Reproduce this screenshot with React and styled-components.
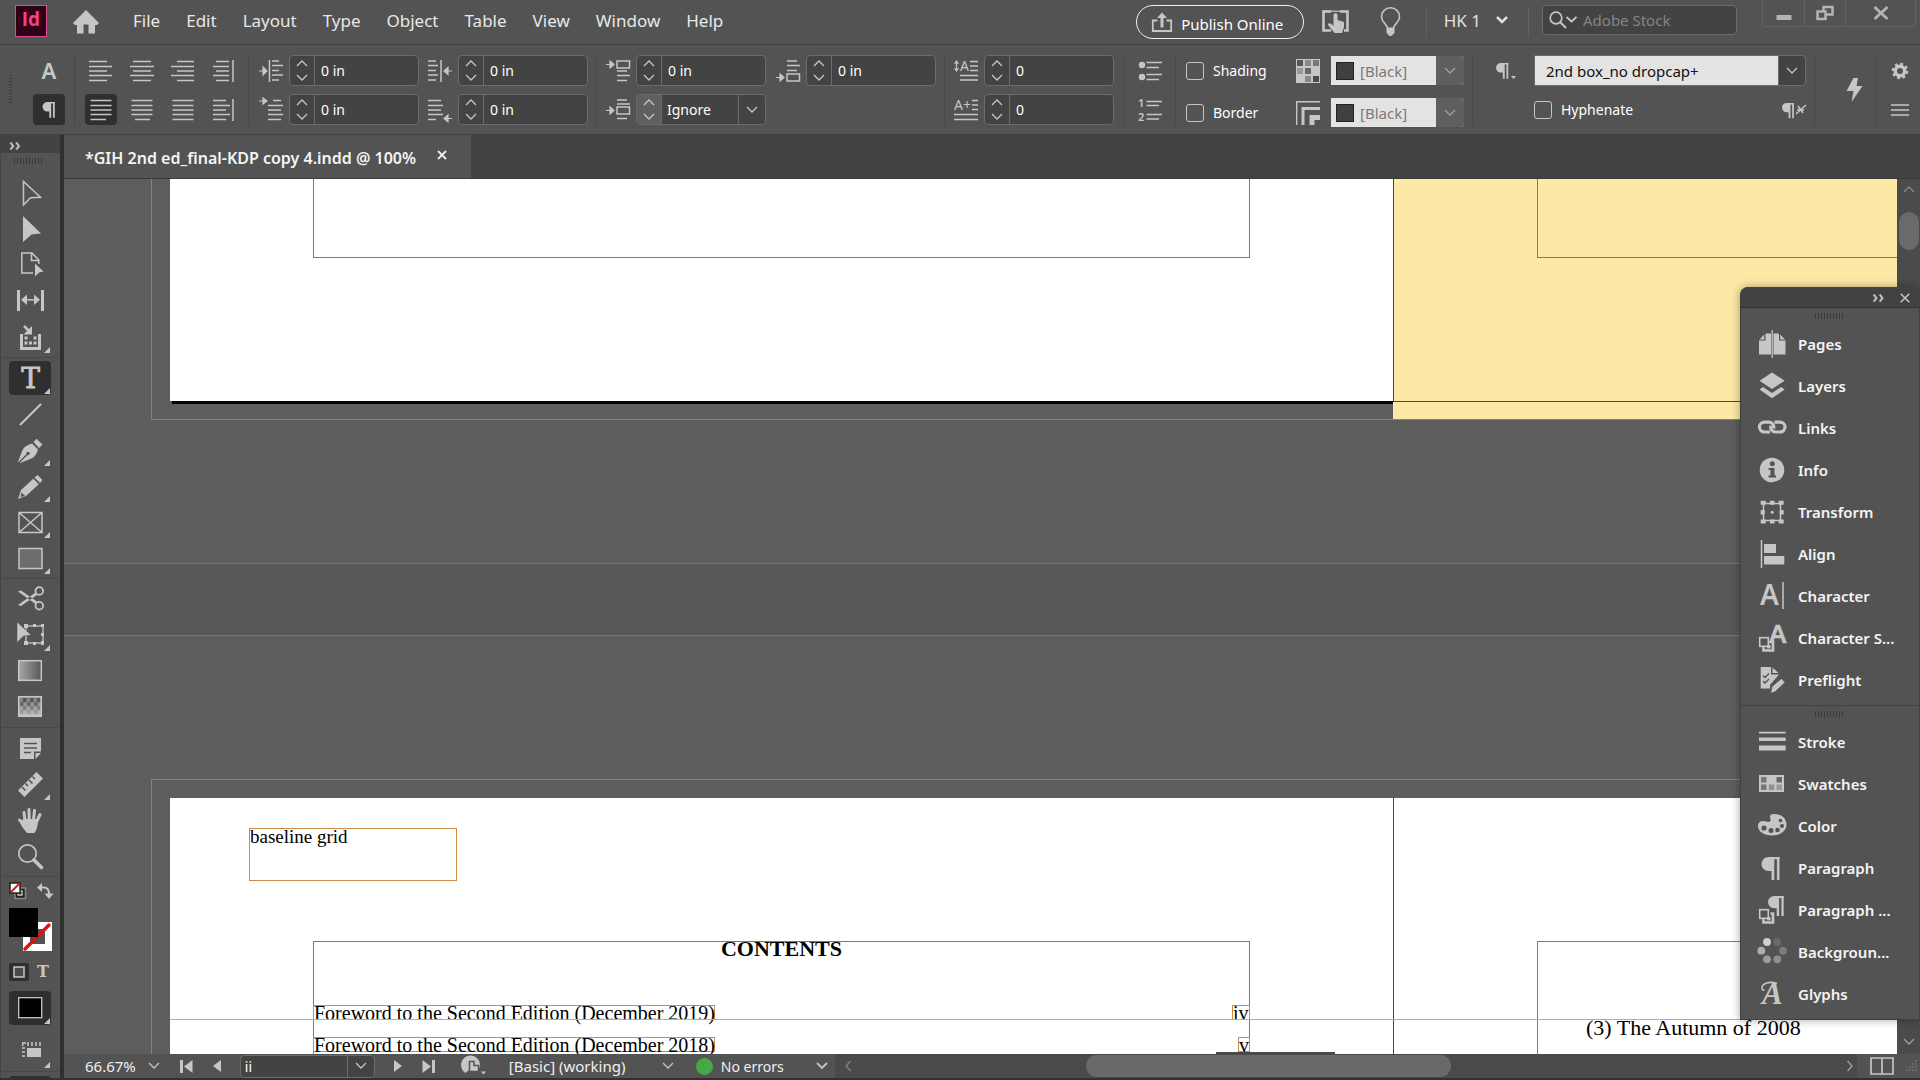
import { useState } from "react";
import styled, { createGlobalStyle } from "styled-components";

const LIGHT = "#c6c6c6";
const DARK = "#535353";

/* ---------- icons ---------- */

const Icon = ({ w = 28, h = w, children, ...rest }) => (
  <svg width={w} height={h} viewBox={`0 0 ${w} ${h}`} fill="none" aria-hidden="true" {...rest}>
    {children}
  </svg>
);

const Chevron = ({ up, w = 12, color = LIGHT, weight = 1.3 }) => (
  <Icon w={w} h={8}>
    <path
      d={up ? `M1 7L${w / 2} 2L${w - 1} 7` : `M1 1L${w / 2} 6L${w - 1} 1`}
      stroke={color}
      strokeWidth={weight}
    />
  </Icon>
);

const lineY = [2.5, 7.5, 12, 16.5, 21.5];
const tightY = [2, 6.5, 11.5, 16, 21];

const Lines = ({ rows, ys = lineY, children }) => (
  <Icon w={24}>
    {rows.map(([a, b], i) => (
      <path key={i} d={`M${a} ${ys[i]}H${b}`} stroke={LIGHT} strokeWidth="1.5" />
    ))}
    {children}
  </Icon>
);

const L = [[0, 18], [0, 23], [0, 18], [0, 23], [0, 18]];
const C = [[3, 21], [0, 24], [3, 21], [0, 24], [3, 21]];
const R = [[6, 23], [0, 23], [6, 23], [0, 23], [6, 23]];
const full = [1.5, 22.5];

const alignTop = [
  ["Align left", <Lines rows={L} />],
  ["Align center", <Lines rows={C} />],
  ["Align right", <Lines rows={R} />],
  [
    "Align away from spine",
    <Lines rows={[[4, 17], [1, 17], [4, 17], [1, 17], [4, 17]]}>
      <path d="M21 1V23" stroke={LIGHT} strokeWidth="1.5" />
    </Lines>,
  ],
];
const alignBottom = [
  ["Justify, last line left", <Lines rows={[full, full, full, full, [1.5, 17]]} />],
  ["Justify, last line centered", <Lines rows={[full, full, full, full, [5, 20]]} />],
  ["Justify all lines", <Lines rows={[full, full, full, full, full]} />],
  [
    "Align towards spine",
    <Lines rows={[[1, 14], [1, 18], [1, 14], [1, 18], [1, 14]]}>
      <path d="M21 1V23" stroke={LIGHT} strokeWidth="1.5" />
    </Lines>,
  ],
];

const ArrowRight = ({ y, half = 4 }) => (
  <path
    d={`M0 ${y}h5M4 ${y - half}l4 ${half}l-4 ${half}z`}
    fill={LIGHT}
    stroke={LIGHT}
    strokeWidth="1.2"
  />
);
const ArrowLeft = ({ y }) => (
  <path
    d={`M24 ${y}h-5M20 ${y - 3.5}l-4 3.5l4 3.5z`}
    fill={LIGHT}
    stroke={LIGHT}
    strokeWidth="1.2"
  />
);

const LeftIndent = () => (
  <Lines rows={[[13, 20], [13, 24], [13, 20], [13, 24], [13, 20]]} ys={tightY}>
    <path d="M10.5 1V23" stroke={LIGHT} strokeWidth="1.5" />
    <ArrowRight y={12} />
  </Lines>
);
const FirstIndent = () => (
  <Lines rows={[[14, 22], [9, 24], [9, 22], [9, 24], [9, 22]]}>
    <ArrowRight y={3} half={3} />
  </Lines>
);
const RightIndent = () => (
  <Lines rows={[[0, 8], [0, 10], [0, 8], [0, 10], [0, 8]]} ys={tightY}>
    <path d="M13 1V23" stroke={LIGHT} strokeWidth="1.5" />
    <ArrowLeft y={12} />
  </Lines>
);
const LastIndent = () => (
  <Lines rows={[[0, 13], [0, 15], [0, 13], [0, 15], [0, 8]]}>
    <ArrowLeft y={20.5} />
  </Lines>
);
const spaceBoxes = {
  top: { y: 2, lines: [12, 16.5, 21.5] },
  middle: { y: 9, lines: [2, 6, 20.5] },
  bottom: { y: 15, lines: [2, 6.5, 11.5] },
};
const SpaceIcon = ({ box }) => {
  const { y, lines } = spaceBoxes[box];
  return (
    <Lines rows={[[11, 21], [11, 24], [11, 21]]} ys={lines}>
      <rect x="11" y={y} width="12.5" height="7" stroke={LIGHT} strokeWidth="1.5" />
      <ArrowRight y={y + 3.5} half={3.5} />
    </Lines>
  );
};
const DropLines = () => (
  <Icon w={24}>
    <path d="M2.5 3V11M0.5 5l2-3l2 3M0.5 9l2 3l2-3" stroke={LIGHT} strokeWidth="1.2" />
    <text x="6" y="12" fontSize="14" fill={LIGHT}>A</text>
    <path d="M16 2.5h8M16 7h8M16 11.5h8M6 16.5h18M6 21h18" stroke={LIGHT} strokeWidth="1.5" />
  </Icon>
);
const DropChars = () => (
  <Icon w={24}>
    <text x="0" y="12" fontSize="14" fill={LIGHT}>A+</text>
    <path d="M18 2.5h6M18 7h6M18 11.5h6M0 16.5h24M0 21.5h24" stroke={LIGHT} strokeWidth="1.5" />
  </Icon>
);
const Bullets = () => (
  <Icon w={24}>
    <circle cx="4" cy="6" r="3.2" fill={LIGHT} />
    <circle cx="4" cy="18" r="3.2" fill={LIGHT} />
    <path d="M8.5 3.5H24M8.5 8.5H21M8.5 15.5H24M8.5 20.5H21" stroke={LIGHT} strokeWidth="1.5" />
  </Icon>
);
const Numbers = () => (
  <Icon w={24}>
    <text x="0" y="9" fontSize="11" fontWeight="600" fill={LIGHT}>1</text>
    <text x="0" y="23" fontSize="11" fontWeight="600" fill={LIGHT}>2</text>
    <path d="M8.5 3.5H24M8.5 7.5H21M8.5 16.5H24M8.5 21H21" stroke={LIGHT} strokeWidth="1.5" />
  </Icon>
);
const SwatchGrid = () => (
  <Icon w={24}>
    <rect width="24" height="24" fill={LIGHT} />
    {[
      [1, 1, "#555"], [9, 1, "#8a8a8a"], [17, 1, "#777"],
      [1, 9, "#999"], [9, 9, "#666"],
      [9, 17, "#888"], [17, 17, "#4c4c4c"],
    ].map(([x, y, f]) => (
      <rect key={`${x}-${y}`} x={x} y={y} width="6" height="6" fill={f} />
    ))}
  </Icon>
);
const CornerIcon = () => (
  <Icon w={24}>
    <path d="M0.7 24V0.7H24" stroke={LIGHT} strokeWidth="1.4" />
    <path d="M7 24V7.5H24" stroke={LIGHT} strokeWidth="3" />
    <path d="M16 24V16.5H24" stroke={LIGHT} strokeWidth="5" />
  </Icon>
);
const Pilcrow = ({ x = 0, y = 0, s = 1 }) => (
  <g transform={`translate(${x} ${y}) scale(${s})`} fill={LIGHT}>
    <path d="M7 0H18V2.2H11V14H7A7 7 0 0 1 7 0Z" />
    <path d="M10 0h2.8v23H10zM15.4 0H18v23h-2.6z" />
  </g>
);
const Gear = () => (
  <Icon w={18}>
    <circle cx="9" cy="9" r="4.7" stroke={LIGHT} strokeWidth="3.4" />
    <circle cx="9" cy="9" r="7" stroke={LIGHT} strokeWidth="2.6" strokeDasharray="2.8 2.7" />
  </Icon>
);
const MoreMark = () => (
  <Corner width="6" height="6" viewBox="0 0 6 6" aria-hidden="true">
    <path d="M6 0V6H0Z" fill={LIGHT} />
  </Corner>
);

const toolGroups = [
  [
    { name: "Selection", icon: <path d="M7.5 2.5V26L14.5 18.8L24.5 18.3Z" stroke={LIGHT} strokeWidth="1.5" /> },
    { name: "Direct selection", icon: <path d="M7 1L25 18.5L15.5 19.5L7 27Z" fill={LIGHT} /> },
    {
      name: "Page",
      icon: (
        <>
          <path d="M17 22H5.8V2H16L22.8 9V13M15.5 2V9.5H22.8" stroke={LIGHT} strokeWidth="1.5" />
          <path d="M19 12.5L27.5 20.5L23 21.5L19 25.5Z" fill={LIGHT} />
        </>
      ),
    },
    {
      name: "Gap",
      icon: (
        <>
          <path d="M2.5 3V24M26.5 3V24" stroke={LIGHT} strokeWidth="3" />
          <path d="M8 12.8H21" stroke={LIGHT} strokeWidth="1.5" />
          <path d="M5 12.8L11 7.5V18ZM24 12.8L18 7.5V18Z" fill={LIGHT} />
        </>
      ),
    },
    {
      name: "Content collector",
      more: true,
      icon: (
        <>
          <path d="M5.5 11V25.5H23.5V11" stroke={LIGHT} strokeWidth="3" />
          <path d="M8 3L14 9" stroke={LIGHT} strokeWidth="2.5" />
          <path d="M16 3V11.5H7.5Z" fill={LIGHT} />
          <path
            d="M8.5 13.5h3v3h-3zM17.5 13.5h3v3h-3zM8.5 18.5h3v3h-3zM13 18.5h3v3h-3zM17.5 18.5h3v3h-3z"
            fill={LIGHT}
          />
        </>
      ),
    },
  ],
  [
    {
      name: "Type",
      more: true,
      icon: (
        <text
          x="14.5"
          y="24"
          textAnchor="middle"
          fontFamily="DejaVu Serif"
          fontSize="28"
          fill={LIGHT}
          stroke={LIGHT}
          strokeWidth="0.9"
        >
          T
        </text>
      ),
    },
    { name: "Line", icon: <path d="M4 25L25 4" stroke={LIGHT} strokeWidth="2.2" /> },
    {
      name: "Pen",
      more: true,
      icon: (
        <>
          <path d="M17.5 6L20.5 2.7L26.5 8.5L23 12Z" fill={LIGHT} />
          <path d="M16 7.5C11 9 8 11 6.5 14L2 26L4 27L15.5 22.5C19 20.5 20.5 18 22 13.5Z" fill={LIGHT} />
          <path d="M2.5 27L11 18.5" stroke={DARK} strokeWidth="1.5" />
          <circle cx="12" cy="17.5" r="1.7" fill={DARK} />
        </>
      ),
    },
    {
      name: "Pencil",
      more: true,
      icon: (
        <>
          <path d="M18.5 5.5L21.5 3L26.5 8L24 11Z" fill={LIGHT} />
          <path d="M17.3 6.7L22.8 12.2L10 24L2 27L5 18Z" fill={LIGHT} />
          <path d="M5.5 20.5L9 24L4.5 25Z" fill={DARK} />
        </>
      ),
    },
    {
      name: "Rectangle frame",
      more: true,
      icon: <path d="M3 4.5H26V24.5H3ZM3 4.5L26 24.5M26 4.5L3 24.5" stroke={LIGHT} strokeWidth="1.5" />,
    },
    {
      name: "Rectangle",
      more: true,
      icon: <rect x="3" y="4.5" width="23" height="20" fill="#6c6c6c" stroke={LIGHT} strokeWidth="1.5" />,
    },
  ],
  [
    {
      name: "Scissors",
      icon: (
        <>
          <circle cx="23.3" cy="6" r="3.8" stroke={LIGHT} strokeWidth="1.8" />
          <circle cx="23.3" cy="20.7" r="3.8" stroke={LIGHT} strokeWidth="1.8" />
          <path d="M2 6.5L5 5.5L21 16.5L19.5 19ZM2 20L5 21L21 10L19.5 7.5Z" fill={LIGHT} />
        </>
      ),
    },
    {
      name: "Free transform",
      more: true,
      icon: (
        <>
          <rect x="10" y="5" width="17" height="17" stroke={LIGHT} strokeWidth="1.3" />
          <path
            d="M8 3h4v4h-4zM17 3h3v3h-3zM25 3h3v3h-3zM25 12h3v3h-3zM25 20h3v4h-3zM17 21h3v3h-3zM8 20h4v4h-4z"
            fill={LIGHT}
          />
          <path d="M1 1L15 14L7.5 15L1 21.5Z" fill={LIGHT} stroke={DARK} strokeWidth="0.5" />
        </>
      ),
    },
    {
      name: "Gradient swatch",
      icon: (
        <>
          <linearGradient id="grad">
            <stop offset="0" stopColor="#a8a8a8" />
            <stop offset="1" stopColor="#585858" />
          </linearGradient>
          <rect x="2.7" y="3.7" width="22.6" height="19.6" fill="url(#grad)" stroke={LIGHT} strokeWidth="1.5" />
        </>
      ),
    },
    {
      name: "Gradient feather",
      icon: (
        <>
          <linearGradient id="fade" x2="0" y2="1">
            <stop offset="0.2" stopColor="#858585" />
            <stop offset="1" stopColor="#c0c0c0" />
          </linearGradient>
          <rect x="2.7" y="3.7" width="22.6" height="19.6" fill="url(#fade)" stroke={LIGHT} strokeWidth="1.5" />
          {[0, 1, 2, 3].map((r) =>
            [0, 1, 2].map((c) => (
              <rect
                key={`${r}-${c}`}
                x={(r % 2 ? 4 : 8) + c * 7 - (r % 2 ? 0 : 1)}
                y={5 + r * 4}
                width={c === 2 && r % 2 === 0 ? 3 : 3.5}
                height="4"
                fill="#444"
                opacity={0.7 - r * 0.17}
              />
            ))
          )}
        </>
      ),
    },
  ],
  [
    {
      name: "Note",
      icon: (
        <>
          <path d="M4 4H25V17.5H18V25H4Z" fill={LIGHT} />
          <path d="M25 19L19.5 25V19Z" fill={LIGHT} />
          <path d="M8 9.5H21M8 14H21M8 18.5H15" stroke={DARK} strokeWidth="1.5" />
        </>
      ),
    },
    {
      name: "Measure",
      more: true,
      icon: (
        <>
          <path d="M2 20.5L20.5 2L27 8.5L8.5 27Z" fill={LIGHT} />
          <path
            d="M6 17L9.5 20.5M9.5 13.5L12 16M13 10L16.5 13.5M16.5 6.5L19 9"
            stroke={DARK}
            strokeWidth="1.5"
          />
        </>
      ),
    },
    {
      name: "Hand",
      icon: (
        <>
          <path
            d="M9 15L8 6.5M13.2 14L13 3.5M17.5 14L18.5 4.5M20.5 16L24 8.5M9 19L3.5 14"
            stroke={LIGHT}
            strokeWidth="3"
            strokeLinecap="round"
          />
          <path d="M7.5 13H21.5C22.5 19 20.5 24 18.5 27H11C8.5 24 6 21 3.5 16Z" fill={LIGHT} />
        </>
      ),
    },
    {
      name: "Zoom",
      icon: (
        <>
          <circle cx="11.5" cy="11.5" r="8.7" stroke={LIGHT} strokeWidth="1.7" />
          <path d="M18 18L25.5 25.5" stroke={LIGHT} strokeWidth="3.5" strokeLinecap="round" />
        </>
      ),
    },
  ],
];

const StyleSquares = () => (
  <>
    <path d="M5.5 23V26.5H15V17.5H12.5" stroke={LIGHT} strokeWidth="2.6" />
    <rect x="1.7" y="13.7" width="8.6" height="8.6" stroke={LIGHT} strokeWidth="1.6" />
    <rect x="9" y="21" width="3.5" height="3.5" fill={LIGHT} />
  </>
);

const panelGroups = [
  [
    ["Pages", (
      <>
        <path d="M1 11V24.5H13V3.5H7.5V10.5H1ZM27.5 11V24.5H15.5V3.5H21V10.5H27.5Z" fill={LIGHT} />
        <path d="M1.5 9.5L6.3 4.5V9.5ZM27 9.5L22.2 4.5V9.5Z" fill={LIGHT} />
        <path d="M14.2 0V28" stroke={LIGHT} strokeWidth="1.3" />
      </>
    )],
    ["Layers", (
      <path
        d="M14 0.5L26.7 8.7L14 17L1.5 8.7ZM1.5 17.5L5 15L14 21L23 15L26.7 17.5L14 26.3Z"
        fill={LIGHT}
      />
    )],
    ["Links", (
      <path
        d="M12 18H6.4A4.9 4.9 0 0 1 6.4 8.2H11A4.9 4.9 0 0 1 15.6 14.5M16.5 8.2H22.1A4.9 4.9 0 0 1 22.1 18H17.5A4.9 4.9 0 0 1 12.9 11.7"
        stroke={LIGHT}
        strokeWidth="3.2"
      />
    )],
    ["Info", (
      <>
        <circle cx="14" cy="14" r="12.3" fill={LIGHT} />
        <circle cx="14.3" cy="7.8" r="2.5" fill={DARK} />
        <path d="M10.5 12H16.5V19.5H18V21.5H10.5V19.5H12.5V14H10.5Z" fill={DARK} />
      </>
    )],
    ["Transform", (
      <>
        <rect x="5.5" y="5.5" width="17" height="17" stroke={LIGHT} strokeWidth="1.5" />
        <path
          d="M2.7 2.7h5v4h-5zM12 2.7h4.5v4H12zM20.7 2.7h5v4h-5zM2.7 12h4v4.5h-4zM21.7 12h4v4.5h-4zM2.7 21.5h5v4h-5zM12 21.5h4.5v4H12zM20.7 21.5h5v4h-5z"
          fill={LIGHT}
        />
        <circle cx="14.2" cy="14.2" r="1.5" fill={LIGHT} />
      </>
    )],
    ["Align", (
      <>
        <path d="M3.5 0V28" stroke={LIGHT} strokeWidth="1.5" />
        <path d="M6 4h12v9H6zM6 16h20.3v8.5H6z" fill={LIGHT} />
      </>
    )],
    ["Character", (
      <>
        <text x="2" y="23" fontWeight="600" fontSize="28" fill={LIGHT}>A</text>
        <path d="M25 0V27" stroke={LIGHT} strokeWidth="1.5" />
      </>
    )],
    ["Character Styles", (
      <>
        <text x="11" y="19" fontSize="26" fill={LIGHT} stroke={LIGHT} strokeWidth="0.5">A</text>
        <StyleSquares />
      </>
    ), "Character S..."],
    ["Preflight", (
      <>
        <path d="M2.7 1H13V8.5H21L12 19V22.5H2.7Z" fill={LIGHT} />
        <path d="M14.5 1.5L20.5 7H14.5Z" fill={LIGHT} />
        <path d="M5 9.5L7 11.5L11 7.5M5 15L7 17L11 13" stroke={DARK} strokeWidth="1.4" />
        <path
          d="M14 20.5L23.5 12.5L27 16.5L17.5 25.5L12.5 27.5Z"
          fill={LIGHT}
          stroke={DARK}
          strokeWidth="0.8"
        />
      </>
    )],
  ],
  [
    ["Stroke", <path d="M1 3.7h26.7v1.8H1zM1 9.5h26.7v3.5H1zM1 17.5h26.7v5H1z" fill={LIGHT} />],
    ["Swatches", (
      <>
        <rect x="1" y="5" width="25" height="17" fill={LIGHT} />
        <path d="M3 7h5.5v5.5H3zM3 14.5h5.5V20H3z" fill="#777" />
        <path d="M10.8 14.5h5.5V20h-5.5z" fill="#8f8f8f" />
        <path d="M18.5 7H24v5.5h-5.5z" fill="#666" />
        <path d="M18.5 14.5H24V20h-5.5z" fill="#999" />
      </>
    )],
    ["Color", (
      <>
        <path
          d="M16 2C23 2 28.5 6 28.5 12.5C28.5 19 22 23.5 14.500 23.5C6 23.5 0 19.5 0 14C0 9.5 4 8 8 9.5C11 10.5 13.5 9.5 12.5 7C11.5 4 11.5 2 16 2Z"
          fill={LIGHT}
        />
        <circle cx="6" cy="16" r="2.6" fill={DARK} />
        <circle cx="13" cy="18.5" r="2.5" fill={DARK} />
        <circle cx="19.5" cy="18" r="2.3" fill={DARK} />
        <circle cx="24" cy="14" r="2" fill={DARK} />
        <circle cx="22.5" cy="8.5" r="1.8" fill={DARK} />
      </>
    )],
    ["Paragraph", <Pilcrow x={3.5} y={3} />],
    ["Paragraph Styles", (
      <>
        <Pilcrow x={10} y={0} s={0.87} />
        <StyleSquares />
      </>
    ), "Paragraph ..."],
    ["Background Tasks", (
      <>
        {[
          [9, 4, "#d0d0d0"],
          [19.3, 4, "#696969"],
          [25, 12.7, "#7c7c7c"],
          [19.3, 21.3, "#8e8e8e"],
          [9, 21.3, "#9d9d9d"],
          [3.3, 12.7, "#adadad"],
        ].map(([cx, cy, f]) => (
          <circle key={f} cx={cx} cy={cy} r="3.9" fill={f} />
        ))}
      </>
    ), "Backgroun..."],
    ["Glyphs", (
      <>
        <text x="4" y="24" fontFamily="Liberation Serif" fontStyle="italic" fontSize="31" fill={LIGHT}>A</text>
        <path d="M19 3.5C12 1 4 3 4 8C4 9.5 5 10.5 6.5 10" stroke={LIGHT} strokeWidth="1.6" />
      </>
    )],
  ],
];

/* ---------- small building blocks ---------- */

const Spin = ({ label, value, select }) => {
  const [v, setV] = useState(value);
  return (
    <SpinBox>
      <SpinButtons $off={select}>
        <Bare type="button" aria-label={`Increase ${label}`}><Chevron up /></Bare>
        <Bare type="button" aria-label={`Decrease ${label}`}><Chevron /></Bare>
      </SpinButtons>
      {select ? (
        <>
          <SpinSelect aria-label={label} defaultValue={value}>
            <option>{value}</option>
          </SpinSelect>
          <SelectArrow><Chevron /></SelectArrow>
        </>
      ) : (
        <SpinInput aria-label={label} value={v} onChange={(e) => setV(e.target.value)} />
      )}
    </SpinBox>
  );
};

const Check = ({ children }) => (
  <CheckLabel>
    <CheckBox type="checkbox" />
    {children}
  </CheckLabel>
);

const ColorPick = ({ label }) => (
  <ColorField>
    <Swatch />
    <ColorSelect aria-label={label} disabled defaultValue="[Black]">
      <option>[Black]</option>
    </ColorSelect>
    <ColorArrow><Chevron color="#a0a0a0" /></ColorArrow>
  </ColorField>
);

const menus = ["File", "Edit", "Layout", "Type", "Object", "Table", "View", "Window", "Help"];

const MenuBar = () => (
  <Menu>
    <Logo>Id</Logo>
    <HomeButton type="button" aria-label="Home">
      <Icon w={26} h={24}>
        <path d="M13 0L26 13L24 15H22V23.5H15.5V14.5H10.5V23.5H4V15H2L0 13Z" fill={LIGHT} />
      </Icon>
    </HomeButton>
    <MenuItems>
      {menus.map((m) => <MenuItem key={m} type="button">{m}</MenuItem>)}
    </MenuItems>
    <Publish type="button">
      <Icon w={20} h={20}>
        <path d="M5.5 8.5H0.8V19H19.2V8.5H14.5" stroke={LIGHT} strokeWidth="1.8" />
        <path d="M10 15.5V5" stroke={LIGHT} strokeWidth="3" />
        <path d="M10 0.5L15 6H5Z" fill={LIGHT} />
      </Icon>
      <span>Publish Online</span>
    </Publish>
    <TopIcon type="button" aria-label="Touch workspace">
      <Icon w={27} h={24}>
        <path d="M9 1.5H1.5V20.5H9M18 1.5H25.5V20.5H22" stroke={LIGHT} strokeWidth="2.6" />
        <path d="M1 1.2H26" stroke={LIGHT} strokeWidth="1.2" />
        <path d="M11.500 5C11.5 2.500 15.5 2.500 15.5 5V10L22 12V17L20 23H12.500L6 15C6 12.500 8.5 12.500 11.5 16Z" fill={LIGHT} />
      </Icon>
    </TopIcon>
    <TopIcon type="button" aria-label="Learn">
      <Icon w={21} h={30}>
        <path
          d="M7.5 21.5C7.5 17 1.5 16 1.5 9.800A9 9 0 0 1 19.5 9.8C19.5 16 13.5 17 13.5 21.5"
          stroke={LIGHT}
          strokeWidth="1.6"
        />
        <path d="M6.5 20.5H14.5V26L11.5 29H9.5L6.5 26Z" fill={LIGHT} />
      </Icon>
    </TopIcon>
    <Workspace type="button">
      HK 1
      <Chevron w={12} weight={2.5} color="#e0e0e0" />
    </Workspace>
    <Search>
      <Icon w={28} h={18}>
        <circle cx="7" cy="7" r="5.8" stroke={LIGHT} strokeWidth="1.7" />
        <path d="M11 11L17 17" stroke={LIGHT} strokeWidth="2" />
        <path d="M17.5 6L22.5 10.5L27.5 6" stroke={LIGHT} strokeWidth="1.7" />
      </Icon>
      <SearchInput aria-label="Adobe Stock" placeholder="Adobe Stock" />
    </Search>
    <WindowButtons>
      <WinButton type="button" aria-label="Minimize">
        <Icon w={16}><path d="M0.5 15H15.5V20H0.5Z" fill="#b4b4b4" transform="translate(0 -5)" /></Icon>
      </WinButton>
      <WinButton type="button" aria-label="Restore">
        <Icon w={18} h={16}>
          <path d="M7.5 2H16.5V9.5H7.5Z" stroke="#b4b4b4" strokeWidth="2.5" />
          <path d="M1.5 6.5H9.5V14H1.5Z" fill={DARK} stroke="#b4b4b4" strokeWidth="2.5" />
        </Icon>
      </WinButton>
      <WinButton type="button" aria-label="Close" $wide>
        <Icon w={16} h={14}><path d="M1.5 1L14.5 13M14.5 1L1.5 13" stroke="#b4b4b4" strokeWidth="2.8" /></Icon>
      </WinButton>
    </WindowButtons>
  </Menu>
);

const ControlBar = () => (
  <Controls>
    <Group $pl={9} $pr={9}>
      <SideGrip />
      <Stack>
        <ModeButton type="button" aria-label="Character formatting">
          <Icon w={24}>
            <text x="12" y="20" textAnchor="middle" fontWeight="600" fontSize="22" fill={LIGHT}>A</text>
          </Icon>
        </ModeButton>
        <ModeButton type="button" aria-label="Paragraph formatting" $on>
          <Icon w={24}><Pilcrow x={5.5} y={4} s={0.68} /></Icon>
        </ModeButton>
      </Stack>
    </Group>
    <Group $pl={10} $pr={8}>
      <Stack>
        <Row $gap={9}>
          {alignTop.map(([n, i]) => (
            <ModeButton key={n} type="button" aria-label={n}>{i}</ModeButton>
          ))}
        </Row>
        <Row $gap={9}>
          {alignBottom.map(([n, i], k) => (
            <ModeButton key={n} type="button" aria-label={n} $on={k === 0}>{i}</ModeButton>
          ))}
        </Row>
      </Stack>
    </Group>
    <Group $pl={10} $pr={8} $gap={9}>
      <Stack>
        <Row><LeftIndent /><Spin label="Left indent" value="0 in" /></Row>
        <Row><FirstIndent /><Spin label="First line left indent" value="0 in" /></Row>
      </Stack>
      <Stack>
        <Row><RightIndent /><Spin label="Right indent" value="0 in" /></Row>
        <Row><LastIndent /><Spin label="Last line right indent" value="0 in" /></Row>
      </Stack>
    </Group>
    <Group $pl={9} $pr={8} $gap={10}>
      <Stack>
        <Row><SpaceIcon box="top" /><Spin label="Space before" value="0 in" /></Row>
        <Row><SpaceIcon box="middle" /><Spin label="Space between paragraphs" value="Ignore" select /></Row>
      </Stack>
      <Stack>
        <Row><SpaceIcon box="bottom" /><Spin label="Space after" value="0 in" /></Row>
      </Stack>
    </Group>
    <Group $pl={9} $pr={9}>
      <Stack>
        <Row><DropLines /><Spin label="Drop cap lines" value="0" /></Row>
        <Row><DropChars /><Spin label="Drop cap characters" value="0" /></Row>
      </Stack>
    </Group>
    <Group $pl={14} $pr={13}>
      <Stack>
        <Row><Bare type="button" aria-label="Bulleted list"><Bullets /></Bare></Row>
        <Row><Bare type="button" aria-label="Numbered list"><Numbers /></Bare></Row>
      </Stack>
    </Group>
    <Group $pl={10} $pr={8}>
      <Stack $gap={11}>
        <Row $gap={11}><Check>Shading</Check><SwatchGrid /><ColorPick label="Shading color" /></Row>
        <Row $gap={11}><Check>Border</Check><CornerIcon /><ColorPick label="Border color" /></Row>
      </Stack>
    </Group>
    <Group $pl={23} $pr={8} $grow $gap={14}>
      <Row>
        <Icon w={24}>
          <Pilcrow y={4} s={0.68} />
          <path d="M15 17h5l-2.5 3z" fill={LIGHT} />
        </Icon>
      </Row>
      <Stack $grow>
        <StyleField>
          <StyleSelect aria-label="Paragraph style" defaultValue="2nd box_no dropcap+">
            <option>2nd box_no dropcap+</option>
          </StyleSelect>
          <SelectArrow><Chevron /></SelectArrow>
        </StyleField>
        <Row $between>
          <Check>Hyphenate</Check>
          <Bare type="button" aria-label="Clear overrides">
            <Icon w={24}>
              <Pilcrow y={5} s={0.66} />
              <path d="M14 16L24 7M16 8L21 15M15 12H22" stroke={LIGHT} strokeWidth="1.5" />
            </Icon>
          </Bare>
        </Row>
      </Stack>
    </Group>
    <Group $pl={31} $pr={13} $middle>
      <Bare type="button" aria-label="Quick apply">
        <Icon w={17} h={24}><path d="M7.5 0H12L10.5 8H16.5L5.5 24L7.5 13H0.5Z" fill={LIGHT} /></Icon>
      </Bare>
    </Group>
    <Group $pl={14} $pr={11} $last>
      <Stack>
        <Row><Bare type="button" aria-label="Customize"><Gear /></Bare></Row>
        <Row>
          <Bare type="button" aria-label="Panel menu">
            <Icon w={18} h={12}><path d="M0 1H18M0 6H18M0 11H18" stroke={LIGHT} strokeWidth="1.5" /></Icon>
          </Bare>
        </Row>
      </Stack>
    </Group>
  </Controls>
);

const Toolbar = () => {
  const [tool, setTool] = useState("Type");
  return (
    <Tools>
      <ToolHead><Double>››</Double></ToolHead>
      <GripRow><Grip /></GripRow>
      {toolGroups.map((group, i) => (
        <ToolGroup key={i}>
          {group.map(({ name, icon, more }) => (
            <Tool
              key={name}
              type="button"
              aria-label={name}
              $on={tool === name}
              onClick={() => setTool(name)}
            >
              <Icon>{icon}</Icon>
              {more && <MoreMark />}
            </Tool>
          ))}
        </ToolGroup>
      ))}
      <SwatchArea>
        <SwatchRow>
          <Bare type="button" aria-label="Default fill and stroke">
            <Icon w={18}>
              <path d="M6 6H16.5V16.5H6Z" fill="#222" stroke="#888" strokeWidth="1.5" />
              <path d="M9 9H13V13H9Z" stroke={LIGHT} strokeWidth="1.3" />
              <rect x="1" y="1" width="10" height="10" fill="#fff" stroke="#222" strokeWidth="1.5" />
              <path d="M2 10L10 2" stroke="#e01010" strokeWidth="1.8" />
            </Icon>
          </Bare>
          <Bare type="button" aria-label="Swap fill and stroke">
            <Icon w={18}>
              <path d="M4 5.5H8Q13 5.5 13 12" stroke={LIGHT} strokeWidth="2" />
              <path d="M1 5.5L6 1V10ZM8.5 11.5H17.5L13 17Z" fill={LIGHT} />
            </Icon>
          </Bare>
        </SwatchRow>
        <Icon w={44}>
          <rect x="14" y="14" width="29" height="29" fill="#fff" />
          <rect x="21" y="21" width="15" height="15" fill={DARK} />
          <path d="M16 41L40 17" stroke="#e8100c" strokeWidth="3.5" strokeLinecap="round" />
          <rect width="29" height="29" fill="#000" />
        </Icon>
        <TargetRow>
          <Target type="button" aria-label="Formatting affects container" $on>
            <Icon w={12}>
              <rect x="1" y="1" width="10" height="10" stroke={LIGHT} strokeWidth="1.5" fill="#4a4a4a" />
            </Icon>
          </Target>
          <Target type="button" aria-label="Formatting affects text">T</Target>
        </TargetRow>
        <Tool type="button" aria-label="Apply color" $on>
          <Icon><rect x="2.7" y="3.7" width="23" height="20" fill="#000" stroke={LIGHT} strokeWidth="1.3" /></Icon>
          <MoreMark />
        </Tool>
        <Tool type="button" aria-label="View options" $gap>
          <Icon>
            <path d="M11 10h14v9H11z" fill={LIGHT} />
            <path
              d="M6 5h4M6.7 4.5V8M12 4V8M16 4V8M20 4V8M24 4V8M6 10h3M6 14h3M6 18h3"
              stroke={LIGHT}
              strokeWidth="1.5"
            />
          </Icon>
          <MoreMark />
        </Tool>
      </SwatchArea>
      <Tool type="button" aria-label="Screen mode" $on />
    </Tools>
  );
};

const Document = () => (
  <Pasteboard>
    <SpreadBand />
    <Item $x={87} $y={-40} $w={2000} $h={281} $line="#cf5f6c" />
    <Item $x={106} $y={-40} $w={1223} $h={262} $fill="#fff" />
    <Item $x={108} $y={222} $w={1221} $h={3} $fill="#000" />
    <Item $x={1329} $y={-40} $w={700} $h={280} $fill="#fde9a6" />
    <Item $x={1329} $y={-40} $w={700} $h={263} $line="#4a4640" />
    <Item $x={249} $y={-40} $w={937} $h={119} $line="#a653c0" />
    <Item $x={1473} $y={-40} $w={600} $h={119} $line="#b254b8" />

    <Item $x={87} $y={600} $w={2000} $h={500} $line="#cf5f6c" />
    <Item $x={106} $y={619} $w={1223} $h={400} $fill="#fff" />
    <Item $x={1329} $y={619} $w={700} $h={400} $fill="#fff" $edge />
    <Item $x={1473} $y={762} $w={600} $h={200} $line="#b254b8" />
    <TextFrame $x={185} $y={649} $w={208} $h={53} $size={19} $lh={16}>baseline grid</TextFrame>
    <Heading $x={249} $y={762} $w={937} $h={200} $size={22} $lh={14}>CONTENTS</Heading>
    <TextFrame $x={249} $y={826} $w={402} $h={15} $size={20} $lh={14}>
      Foreword to the Second Edition (December 2019)
    </TextFrame>
    <TextFrame $x={1168} $y={826} $w={18} $h={15} $size={20} $lh={14}>iv</TextFrame>
    <TextFrame $x={249} $y={858} $w={402} $h={15} $size={20} $lh={14}>
      Foreword to the Second Edition (December 2018)
    </TextFrame>
    <TextFrame $x={1174} $y={858} $w={12} $h={15} $size={20} $lh={14}>v</TextFrame>
    <Item $x={1152} $y={873} $w={119} $h={2} $fill="#4a4a4a" />
    <Guide />
    <PageText $x={1522} $y={836} $w={300} $h={26} $size={22} $lh={26}>(3) The Autumn of 2008</PageText>
  </Pasteboard>
);

const StatusBar = () => (
  <Status>
    <StatusLeft>
      <ZoomPick type="button">66.67% <Chevron /></ZoomPick>
      <PageNav>
        <Bare type="button" aria-label="First page">
          <Icon w={14} h={13}><path d="M1 0h3v13H1zM13.5 0V13L5 6.5Z" fill={LIGHT} /></Icon>
        </Bare>
        <Bare type="button" aria-label="Previous page">
          <Icon w={8} h={12}><path d="M8 0V12L0 6Z" fill={LIGHT} /></Icon>
        </Bare>
      </PageNav>
      <PageField>
        <PageInput aria-label="Page" defaultValue="ii" />
        <PageArrow type="button" aria-label="Choose page"><Chevron /></PageArrow>
      </PageField>
      <PageNav>
        <Bare type="button" aria-label="Next page">
          <Icon w={8} h={12}><path d="M0 0V12L8 6Z" fill={LIGHT} /></Icon>
        </Bare>
        <Bare type="button" aria-label="Last page">
          <Icon w={14} h={13}><path d="M10 0h3v13h-3zM0.5 0V13L9 6.5Z" fill={LIGHT} /></Icon>
        </Bare>
      </PageNav>
      <Profiles>
        <Bare type="button" aria-label="Open page history">
          <Icon w={27} h={20}>
            <path d="M5.500 17A9.500 9.500 0 1 1 19.500 12L14 14V8L9 5V14Z" fill={LIGHT} />
            <path d="M9.500 5.500H14V9.500H18.500V15.500H9.500Z" fill={LIGHT} stroke={DARK} strokeWidth="1.500" />
            <path d="M21 15.5h5l-2.5 3z" fill={LIGHT} />
          </Icon>
        </Bare>
        <Profile type="button">[Basic] (working) <Chevron /></Profile>
      </Profiles>
      <Preflight type="button">
        <Dot />
        No errors
        <Chevron weight={1.8} />
      </Preflight>
    </StatusLeft>
    <HScroll>
      <Icon w={6} h={12}><path d="M5.5 1L1 6L5.5 11" stroke="#858585" strokeWidth="1.3" /></Icon>
      <HTrack><HThumb /></HTrack>
      <Icon w={6} h={12}><path d="M0.5 1L5 6L0.5 11" stroke="#a0a0a0" strokeWidth="1.3" /></Icon>
    </HScroll>
    <StatusRight>
      <Bare type="button" aria-label="Split layout view">
        <Icon w={24} h={18}><path d="M1 1H23V17H1ZM12 1V17" stroke={LIGHT} strokeWidth="1.7" /></Icon>
      </Bare>
      <Icon w={14}>
        <path
          d="M11 2h2M8 5h5M5 8h8M2 11h11"
          stroke="#777"
          strokeWidth="1.5"
          strokeDasharray="1.5 1.5"
        />
      </Icon>
    </StatusRight>
  </Status>
);

const Dock = () => (
  <DockBox>
    <DockHead>
      <Double>››</Double>
      <Bare type="button" aria-label="Close panels">
        <Icon w={10}><path d="M0.7 0.7L9.3 9.3M9.3 0.7L0.7 9.3" stroke={LIGHT} strokeWidth="1.5" /></Icon>
      </Bare>
    </DockHead>
    {panelGroups.map((group, i) => (
      <DockGroup key={i}>
        <DockGrip><Grip /></DockGrip>
        {group.map(([name, icon, text]) => (
          <DockItem key={name} type="button" title={name}>
            <Icon>{icon}</Icon>
            {text || name}
          </DockItem>
        ))}
      </DockGroup>
    ))}
  </DockBox>
);

const App = () => (
  <Layout>
    <Global />
    <MenuBar />
    <ControlBar />
    <Main>
      <Toolbar />
      <Work>
        <Tabs>
          <Tab>
            *GIH 2nd ed_final-KDP copy 4.indd @ 100%
            <Bare type="button" aria-label="Close document">
              <Icon w={10}><path d="M1 1L9 9M9 1L1 9" stroke="#eee" strokeWidth="1.8" /></Icon>
            </Bare>
          </Tab>
        </Tabs>
        <View>
          <Document />
          <VScroll>
            <Chevron up color="#8a8a8a" />
            <VTrack><VThumb /></VTrack>
            <Chevron color="#a0a0a0" />
          </VScroll>
        </View>
        <StatusBar />
      </Work>
      <Dock />
    </Main>
  </Layout>
);

/* ---------- styles ---------- */

const Global = createGlobalStyle`
  * { box-sizing: border-box; }
  body { margin: 0; background: #323032; overflow: hidden; }
  button, input, select { font-family: inherit; }
  svg { display: block; flex: none; overflow: visible; }
`;
const Layout = styled.div`
  height: 100vh;
  display: flex;
  flex-direction: column;
  background: ${DARK};
  border-bottom: 2px solid #323032;
  color: #f0f0f0;
  font-family: "Noto Sans", "Open Sans", sans-serif;
  font-size: 15px;
`;
const Bare = styled.button`
  display: flex;
  align-items: center;
  justify-content: center;
  padding: 0;
  border: 0;
  background: none;
  color: inherit;
`;
const Menu = styled.header`
  flex: none;
  height: 45px;
  display: flex;
  align-items: center;
  padding-left: 15px;
  border-bottom: 1px solid #404040;
`;
const Logo = styled.div`
  width: 32px;
  height: 32px;
  margin-bottom: 2px;
  border: 1px solid #d4508a;
  background: #2f0016;
  color: #f0428c;
  font: 700 19px/26px "Open Sans", sans-serif;
  text-align: center;
`;
const HomeButton = styled(Bare)`
  margin: 0 21px 0 26px;
`;
const MenuItems = styled.nav`
  display: flex;
  flex: 1;
`;
const MenuItem = styled(Bare)`
  padding: 0 13px;
  height: 40px;
  margin-bottom: 2px;
  font-size: 17px;
  line-height: 24px;
  color: #e8e8e8;
`;
const Publish = styled(Bare)`
  width: 168px;
  height: 34px;
  gap: 9px;
  padding-right: 4px;
  border: 1px solid #f0f0f0;
  border-radius: 17px;
  color: #fff;
  font-size: 15px;
  span {
    padding-top: 4px;
  }
`;
const TopIcon = styled(Bare)`
  width: 27px;
  margin-left: 18px;
  & + & {
    margin-left: 28px;
  }
`;
const Workspace = styled(Bare)`
  margin-left: 22px;
  padding: 0 20px 4px 17px;
  gap: 15px;
  height: 30px;
  border: 1px solid #606060;
  border-width: 0 1px;
  font-size: 17px;
  color: #e0e0e0;
`;
const Search = styled.label`
  width: 195px;
  height: 30px;
  margin: 0 25px 4px 13px;
  padding-left: 6px;
  display: flex;
  align-items: center;
  gap: 4px;
  border: 1px solid #6b6b6b;
  border-radius: 4px;
  background: #434343;
`;
const SearchInput = styled.input`
  width: 140px;
  border: 0;
  outline: 0;
  background: none;
  color: #eee;
  font-size: 15px;
  &::placeholder {
    color: #848484;
  }
`;
const WindowButtons = styled.div`
  display: flex;
  align-self: flex-start;
  height: 27px;
  margin-right: 4px;
  border: 1px solid #626262;
  border-top: 0;
  border-radius: 0 0 4px 4px;
`;
const WinButton = styled(Bare)`
  width: ${({ $wide }) => ($wide ? 70 : 41)}px;
  & + & {
    border-left: 1px solid #626262;
  }
`;
const Controls = styled.section`
  flex: none;
  height: 90px;
  display: flex;
  padding: 10px 0 9px;
  border-bottom: 1px solid #404040;
`;
const Group = styled.div`
  display: flex;
  align-items: ${({ $middle }) => ($middle ? "center" : "flex-start")};
  gap: ${({ $gap = 0 }) => $gap}px;
  padding: 0 ${({ $pr }) => $pr}px 0 ${({ $pl }) => $pl}px;
  flex: ${({ $grow }) => ($grow ? "1" : "none")};
  border-right: ${({ $last }) => ($last ? "0" : "1px solid #494949")};
`;
const Stack = styled.div`
  display: flex;
  flex-direction: column;
  gap: ${({ $gap = 8 }) => $gap}px;
  flex: ${({ $grow }) => ($grow ? "1" : "none")};
`;
const Row = styled.div`
  display: flex;
  align-items: center;
  height: 31px;
  gap: ${({ $gap = 6 }) => $gap}px;
  justify-content: ${({ $between }) => ($between ? "space-between" : "flex-start")};
`;
const SideGrip = styled.div`
  width: 3px;
  height: 28px;
  margin: 20px 21px 0 0;
  background: repeating-linear-gradient(#3c3c3c 0 1px, transparent 1px 3px);
`;
const ModeButton = styled(Bare)`
  width: 32px;
  height: 31px;
  border-radius: 4px;
  background: ${({ $on }) => ($on ? "#2f2f2f" : "none")};
`;
const SpinBox = styled.div`
  width: 130px;
  height: 31px;
  display: flex;
  overflow: hidden;
  border: 1px solid #6b6b6b;
  border-radius: 4px;
  background: #434343;
`;
const SpinButtons = styled.div`
  width: 25px;
  flex: none;
  display: flex;
  flex-direction: column;
  justify-content: space-between;
  padding: 3px 0;
  border-right: 1px solid #6b6b6b;
  background: ${({ $off }) => ($off ? "#5f5f5f" : "none")};
`;
const SpinInput = styled.input`
  min-width: 0;
  flex: 1;
  padding: 0 6px;
  border: 0;
  outline: 0;
  background: none;
  color: #fff;
  font-size: 14px;
`;
const SpinSelect = styled.select`
  flex: 1;
  appearance: none;
  padding: 0 5px;
  border: 0;
  outline: 0;
  background: none;
  color: #fff;
  font-size: 14px;
`;
const SelectArrow = styled.span`
  width: 27px;
  flex: none;
  display: flex;
  align-items: center;
  justify-content: center;
  border-left: 1px solid #6b6b6b;
  pointer-events: none;
`;
const CheckLabel = styled.label`
  width: 99px;
  display: flex;
  align-items: center;
  gap: 9px;
  color: #fff;
  font-size: 14px;
`;
const CheckBox = styled.input`
  appearance: none;
  flex: none;
  width: 18px;
  height: 18px;
  margin: 0;
  border: 1px solid ${LIGHT};
  border-radius: 3px;
  &:checked {
    background: ${LIGHT};
  }
`;
const ColorField = styled.div`
  width: 133px;
  height: 29px;
  display: flex;
  align-items: center;
  overflow: hidden;
  border-radius: 0 4px 4px 0;
  background: #e3e3e3;
`;
const Swatch = styled.span`
  width: 18px;
  height: 18px;
  margin-left: 5px;
  border: 1px solid #222;
  background: #404040;
`;
const ColorSelect = styled.select`
  flex: 1;
  min-width: 0;
  appearance: none;
  padding: 0 6px;
  border: 0;
  background: none;
  color: #7a7a7a;
  opacity: 1;
  font-size: 15px;
`;
const ColorArrow = styled.span`
  width: 28px;
  height: 29px;
  display: flex;
  align-items: center;
  justify-content: center;
  background: #5f5f5f;
`;
const StyleField = styled.div`
  height: 31px;
  display: flex;
  overflow: hidden;
  border: 1px solid #6b6b6b;
  border-radius: 0 4px 4px 0;
  background: #434343;
`;
const StyleSelect = styled.select`
  flex: 1;
  appearance: none;
  padding: 0 11px;
  border: 0;
  background: #e3e3e3;
  color: #111;
  font-size: 15px;
`;
const Main = styled.main`
  position: relative;
  flex: 1;
  min-height: 0;
  display: flex;
`;
const Tools = styled.aside`
  flex: none;
  width: 64px;
  display: flex;
  flex-direction: column;
  overflow: hidden;
  border-left: 1px solid #454545;
  border-right: 4px solid #303030;
`;
const ToolHead = styled.div`
  flex: none;
  height: 18px;
  padding-left: 8px;
  background: #434343;
`;
const Double = styled.span`
  font: 600 17px/15px "Noto Sans", sans-serif;
  color: ${LIGHT};
`;
const GripRow = styled.div`
  flex: none;
  height: 22px;
  padding: 5px 13px;
`;
const Grip = styled.div`
  width: 29px;
  height: 6px;
  background: repeating-linear-gradient(90deg, #3a3a3a 0 1px, transparent 1px 3px);
`;
const ToolGroup = styled.div`
  flex: none;
  display: flex;
  flex-direction: column;
  align-items: flex-start;
  gap: 2px;
  padding: 1px 0 3px 8px;
  border-bottom: 1px solid #494949;
  & + & {
    padding-top: 3px;
  }
`;
const Tool = styled(Bare)`
  position: relative;
  flex: none;
  width: 42px;
  height: 34px;
  margin-top: ${({ $gap }) => ($gap ? 10 : 0)}px;
  border-radius: 4px;
  background: ${({ $on }) => ($on ? "#2f2f2f" : "none")};
  ${Tools} > & {
    margin: 4px 0 0 8px;
  }
`;
const Corner = styled.svg`
  position: absolute;
  right: 1px;
  bottom: 1px;
`;
const SwatchArea = styled.div`
  flex: none;
  display: flex;
  flex-direction: column;
  align-items: flex-start;
  padding: 5px 0 2px 8px;
  border-bottom: 1px solid #494949;
`;
const SwatchRow = styled.div`
  display: flex;
  gap: 9px;
  margin-bottom: 8px;
`;
const TargetRow = styled.div`
  display: flex;
  gap: 4px;
  margin: 11px 0 10px;
`;
const Target = styled(Bare)`
  width: 20px;
  height: 18px;
  border-radius: 3px;
  background: ${({ $on }) => ($on ? "#2f2f2f" : "none")};
  color: ${LIGHT};
  font: 700 16px/18px "DejaVu Serif", serif;
`;
const Work = styled.div`
  flex: 1;
  min-width: 0;
  display: flex;
  flex-direction: column;
`;
const Tabs = styled.div`
  flex: none;
  height: 44px;
  display: flex;
  background: #424242;
  border-bottom: 1px solid #3a3a3a;
`;
const Tab = styled.div`
  display: flex;
  align-items: center;
  gap: 21px;
  padding: 3px 24px 0 21px;
  background: ${DARK};
  color: #f4f4f4;
  font-size: 16px;
  font-weight: 600;
  ${Bare} {
    margin-bottom: 6px;
  }
`;
const View = styled.div`
  flex: 1;
  min-height: 0;
  display: flex;
`;
const Pasteboard = styled.div`
  position: relative;
  flex: 1;
  overflow: hidden;
  background: #5d5d5d;
  color: #000;
  font-family: "Liberation Serif", serif;
`;
const Item = styled.div`
  position: absolute;
  left: ${({ $x }) => $x}px;
  top: ${({ $y }) => $y}px;
  width: ${({ $w }) => $w}px;
  height: ${({ $h }) => $h}px;
  background: ${({ $fill = "none" }) => $fill};
  border: ${({ $line }) => ($line ? `1px solid ${$line}` : "0")};
  ${({ $edge }) => $edge && "border-left: 1px solid #444;"}
`;
const PageText = styled(Item)`
  font-size: ${({ $size }) => $size}px;
  line-height: ${({ $lh }) => $lh}px;
  white-space: nowrap;
`;
const TextFrame = styled(PageText)`
  border: 1px solid #d08a48;
`;
const Heading = styled(PageText)`
  border: 1px solid #a653c0;
  font-weight: 700;
  text-align: center;
`;
const SpreadBand = styled.div`
  position: absolute;
  top: 384px;
  left: 0;
  right: 0;
  height: 73px;
  border: 1px solid #757575;
  border-width: 1px 0;
  background: #575757;
`;
const Guide = styled.div`
  position: absolute;
  top: 840px;
  left: 106px;
  right: 0;
  height: 1px;
  background: #45d8dc;
`;
const VScroll = styled.div`
  flex: none;
  width: 23px;
  display: flex;
  flex-direction: column;
  align-items: center;
  padding: 6px 0 8px;
  background: #4b4b4b;
`;
const VTrack = styled.div`
  flex: 1;
  padding-top: 19px;
`;
const VThumb = styled.div`
  width: 20px;
  height: 38px;
  border-radius: 10px;
  background: #6a6a6a;
`;
const Status = styled.footer`
  flex: none;
  height: 24px;
  display: flex;
  font-size: 15px;
`;
const StatusLeft = styled.div`
  flex: none;
  width: 771px;
  display: flex;
  align-items: center;
  padding-left: 21px;
`;
const ZoomPick = styled(Bare)`
  gap: 12px;
  font-size: 15px;
`;
const PageNav = styled.div`
  display: flex;
  gap: 20px;
  margin: 0 19px;
`;
const PageField = styled.div`
  width: 135px;
  height: 23px;
  display: flex;
  border: 1px solid #6b6b6b;
  border-radius: 4px;
  background: #434343;
`;
const PageInput = styled.input`
  flex: 1;
  min-width: 0;
  padding: 0 4px;
  border: 0;
  outline: 0;
  background: none;
  color: #fff;
  font-size: 14px;
`;
const PageArrow = styled(Bare)`
  width: 27px;
  border-left: 1px solid #6b6b6b;
`;
const Profiles = styled.div`
  display: flex;
  gap: 22px;
  margin-left: 5px;
`;
const Profile = styled(Bare)`
  width: 165px;
  justify-content: space-between;
  font-size: 15px;
`;
const Preflight = styled(Bare)`
  flex: 1;
  margin: 0 7px 0 22px;
  gap: 8px;
  font-size: 14px;
  svg {
    margin-left: auto;
  }
`;
const Dot = styled.span`
  width: 17px;
  height: 17px;
  border-radius: 50%;
  background: #46a948;
`;
const HScroll = styled.div`
  flex: 1;
  display: flex;
  align-items: center;
  padding: 0 4px 0 10px;
  background: #4a4a4a;
`;
const HTrack = styled.div`
  flex: 1;
  margin-left: 3px;
  padding-left: 23%;
`;
const HThumb = styled.div`
  width: 48%;
  height: 22px;
  border-radius: 11px;
  background: #696969;
`;
const StatusRight = styled.div`
  flex: none;
  display: flex;
  align-items: center;
  gap: 10px;
  padding: 0 2px 0 7px;
  margin-left: 6px;
`;
/* floats over the document window */
const DockBox = styled.aside`
  position: absolute;
  top: 152px;
  right: 0;
  width: 180px;
  border: 1px solid #3f3f3f;
  border-top: 0;
  border-radius: 8px 8px 0 0;
  background: ${DARK};
  box-shadow: 0 0 10px rgba(0, 0, 0, 0.35);
`;
const DockHead = styled.div`
  height: 21px;
  display: flex;
  align-items: center;
  justify-content: flex-end;
  gap: 16px;
  padding: 2px 9px 0 0;
  border-radius: 8px 8px 0 0;
  border-bottom: 1px solid #303030;
  background: #424242;
  ${Double} {
    height: 18px;
  }
`;
const DockGroup = styled.div`
  padding-bottom: 4px;
  & + & {
    border-top: 1px solid #414141;
  }
`;
const DockGrip = styled.div`
  height: 15px;
  padding: 5px 0 0 74px;
`;
const DockItem = styled(Bare)`
  width: 100%;
  height: 42px;
  justify-content: flex-start;
  gap: 12px;
  padding-left: 17px;
  color: #f4f4f4;
  font-size: 15px;
  font-weight: 600;
`;

export default App;
